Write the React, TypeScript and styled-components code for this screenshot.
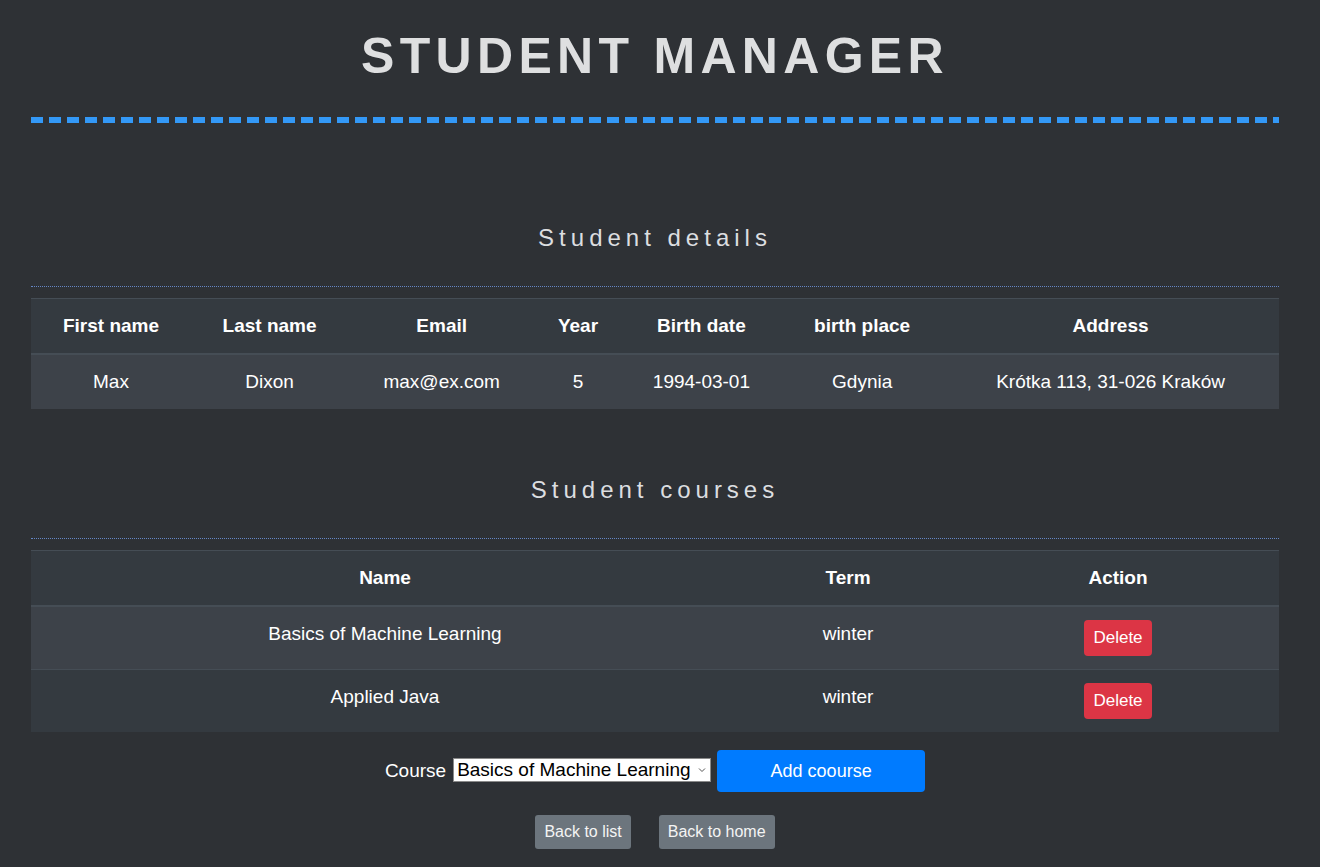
import React from "react";
import styled, { createGlobalStyle } from "styled-components";

const GlobalStyle = createGlobalStyle`
  html, body {
    margin: 0;
    padding: 0;
    background: #2e3135;
  }
  body {
    font-family: "Liberation Sans", Arial, sans-serif;
    color: #ffffff;
    min-height: 100vh;
  }
  * { box-sizing: border-box; }
`;

const Page = styled.div`
  padding: 0 41px 40px 31px;
`;

const Header = styled.header`
  display: flex;
  flex-direction: column;
`;

const Title = styled.h1`
  margin: 28px 0 0;
  font-size: 50px;
  line-height: 57px;
  font-weight: 700;
  letter-spacing: 5.3px;
  text-align: center;
  color: #dedfe0;
`;

const DashedRule = styled.div`
  margin-top: 32px;
  height: 6px;
  background: repeating-linear-gradient(
    to right,
    #3398f6 0,
    #3398f6 12px,
    transparent 12px,
    transparent 18px
  );
`;

const Section = styled.section<{ $first?: boolean }>`
  margin-top: ${(p) => (p.$first ? "101px" : "67px")};
  display: flex;
  flex-direction: column;
`;

const SectionTitle = styled.h2`
  margin: 0;
  font-size: 24px;
  line-height: 28px;
  font-weight: 400;
  letter-spacing: 5px;
  text-align: center;
  color: #dcdee0;
`;

const DottedRule = styled.div`
  margin-top: 34px;
  border-top: 1px dotted #6486c4;
`;

const Table = styled.table`
  margin-top: 11px;
  width: 100%;
  border-collapse: collapse;
  background: #343a40;
  color: #ffffff;
  font-size: 19px;
  line-height: 28px;
`;

const Th = styled.th<{ $width?: string }>`
  padding: 13px 12px;
  border-top: 1px solid #454d55;
  border-bottom: 2px solid #454d55;
  font-weight: 700;
  text-align: center;
  vertical-align: bottom;
  ${(p) => (p.$width ? `width: ${p.$width};` : "")}
`;

const Tr = styled.tr`
  &:nth-of-type(odd) {
    background: #3d4249;
  }
`;

const Td = styled.td`
  padding: 13px 12px;
  border-top: 1px solid #454d55;
  text-align: center;
  vertical-align: top;
`;

const Button = styled.button<{ $variant: "danger" | "primary" | "secondary" }>`
  display: inline-block;
  border: none;
  border-radius: 4px;
  font-family: "Liberation Sans", Arial, sans-serif;
  color: #ffffff;
  cursor: pointer;
  background: ${(p) =>
    p.$variant === "danger" ? "#dc3545" : p.$variant === "primary" ? "#007bff" : "#6c757d"};
`;

const DeleteButton = styled(Button)`
  vertical-align: top;
  padding: 6px 9.5px;
  font-size: 17px;
  line-height: 24px;
`;

const AddRow = styled.form`
  margin-top: 18px;
  display: flex;
  align-items: center;
  justify-content: center;
`;

const Label = styled.label`
  font-size: 19px;
  line-height: 24px;
  color: #ffffff;
  margin-right: 7px;
`;

const SelectWrap = styled.div`
  position: relative;
  display: flex;
  margin-right: 6px;
  margin-top: -3px;
`;

const Select = styled.select`
  appearance: none;
  -webkit-appearance: none;
  width: 258px;
  height: 24px;
  font-family: "Liberation Sans", Arial, sans-serif;
  font-size: 19px;
  line-height: 22px;
  color: #000;
  background: #fff;
  border: 1px solid #8a8a8a;
  border-radius: 0;
  padding: 0 20px 0 3px;
  outline: none;
`;

const Chevron = styled.svg`
  position: absolute;
  right: 5px;
  top: 9px;
  width: 8px;
  height: 6px;
  pointer-events: none;
`;

const AddButton = styled(Button)`
  width: 208px;
  height: 42px;
  font-size: 18px;
  line-height: 24px;
  padding: 0;
`;

const NavRow = styled.div`
  margin-top: 23px;
  display: flex;
  justify-content: center;
  gap: 28px;
`;

const NavButton = styled(Button)`
  padding: 6px 9px;
  font-size: 16px;
  line-height: 22px;
  border-radius: 3px;
  color: #f4f4f4;
`;

const details = {
  headers: ["First name", "Last name", "Email", "Year", "Birth date", "birth place", "Address"],
  row: ["Max", "Dixon", "max@ex.com", "5", "1994-03-01", "Gdynia", "Krótka 113, 31-026 Kraków"],
};

const courses = [
  { name: "Basics of Machine Learning", term: "winter" },
  { name: "Applied Java", term: "winter" },
];

export default function App() {
  return (
    <>
      <GlobalStyle />
      <Page>
        <Header>
          <Title>STUDENT MANAGER</Title>
          <DashedRule />
        </Header>

        <Section $first>
          <SectionTitle>Student details</SectionTitle>
          <DottedRule />
          <Table>
            <thead>
              <tr>
                {details.headers.map((h) => (
                  <Th key={h}>{h}</Th>
                ))}
              </tr>
            </thead>
            <tbody>
              <Tr>
                {details.row.map((c, i) => (
                  <Td key={i}>{c}</Td>
                ))}
              </Tr>
            </tbody>
          </Table>
        </Section>

        <Section>
          <SectionTitle>Student courses</SectionTitle>
          <DottedRule />
          <Table>
            <thead>
              <tr>
                <Th $width="708px">Name</Th>
                <Th $width="218px">Term</Th>
                <Th>Action</Th>
              </tr>
            </thead>
            <tbody>
              {courses.map((c) => (
                <Tr key={c.name}>
                  <Td>{c.name}</Td>
                  <Td>{c.term}</Td>
                  <Td>
                    <DeleteButton type="button" $variant="danger">
                      Delete
                    </DeleteButton>
                  </Td>
                </Tr>
              ))}
            </tbody>
          </Table>
          <AddRow onSubmit={(e) => e.preventDefault()}>
            <Label htmlFor="course">Course</Label>
            <SelectWrap>
              <Select id="course" defaultValue="ml">
                <option value="ml">Basics of Machine Learning</option>
                <option value="java">Applied Java</option>
              </Select>
              <Chevron viewBox="0 0 8 6" aria-hidden="true">
                <path d="M1 1.5 L4 4.5 L7 1.5" fill="none" stroke="#555" strokeWidth="1" />
              </Chevron>
            </SelectWrap>
            <AddButton type="submit" $variant="primary">
              Add coourse
            </AddButton>
          </AddRow>
          <NavRow>
            <NavButton type="button" $variant="secondary">
              Back to list
            </NavButton>
            <NavButton type="button" $variant="secondary">
              Back to home
            </NavButton>
          </NavRow>
        </Section>
      </Page>
    </>
  );
}
